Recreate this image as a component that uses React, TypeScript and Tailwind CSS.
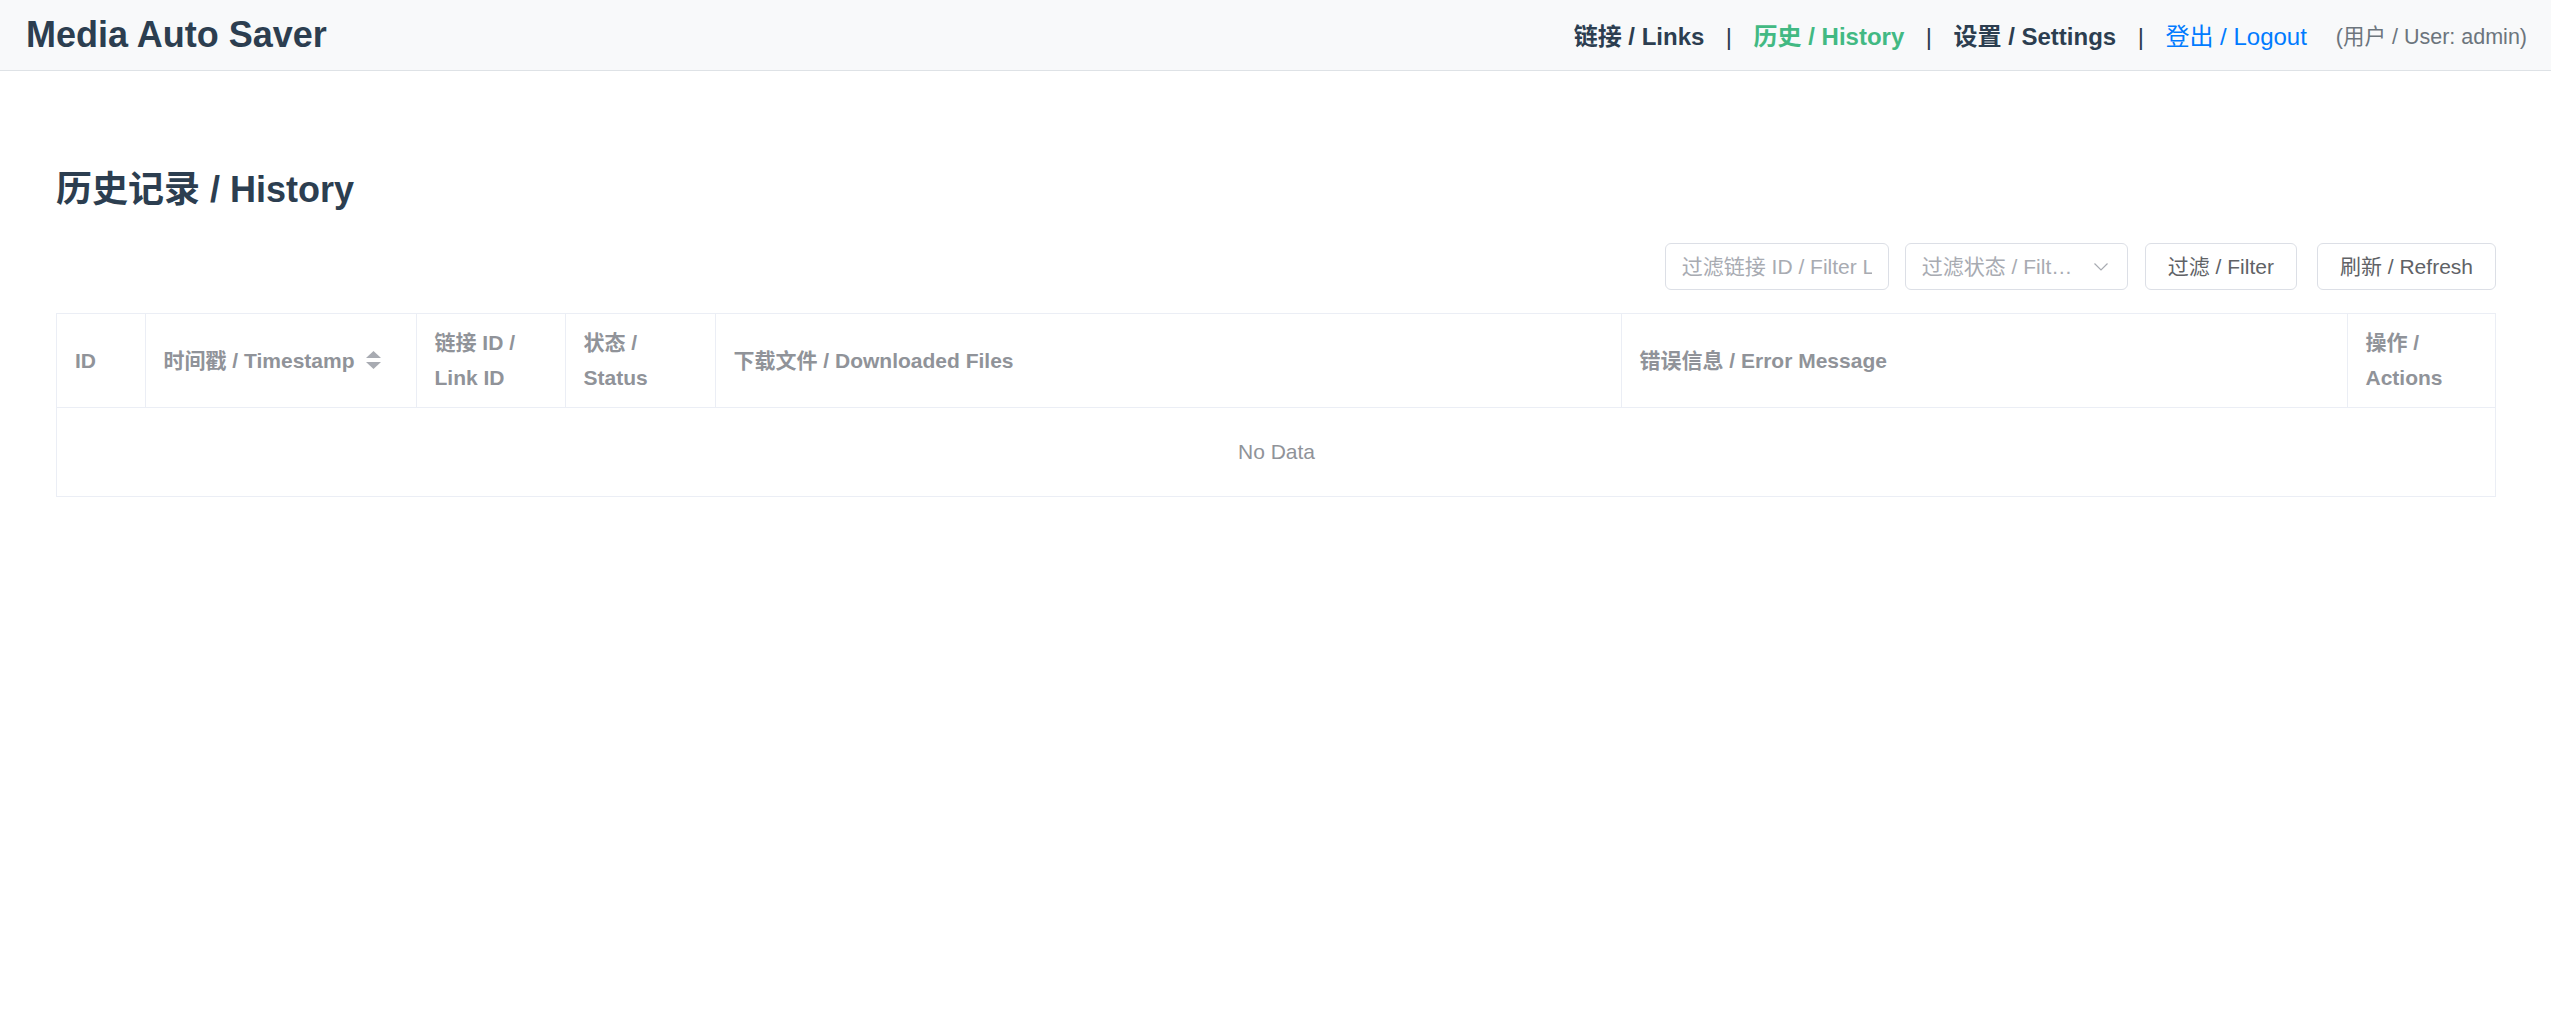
import { useState } from 'react';

const columns = [
  { key: 'id', label: 'ID', width: 88 },
  { key: 'timestamp', label: '时间戳 / Timestamp', width: 271, sortable: true },
  { key: 'link', label: '链接 ID / Link ID', width: 149 },
  { key: 'status', label: '状态 / Status', width: 150 },
  { key: 'files', label: '下载文件 / Downloaded Files', width: 906 },
  { key: 'error', label: '错误信息 / Error Message', width: 726 },
  { key: 'actions', label: '操作 / Actions', width: 149 },
];

function SortCaret() {
  return (
    <svg width="15" height="18" viewBox="0 0 15 18" className="ml-[11px] shrink-0">
      <polygon points="0,7 7.5,0 15,7" fill="#a8abb2" />
      <polygon points="0,11 7.5,18 15,11" fill="#a8abb2" />
    </svg>
  );
}

function Header() {
  const sep = <span className="mx-[21.5px] font-normal text-[#2c3e50]">|</span>;
  return (
    <header className="h-[71px] bg-[#f8f9fa] border-b border-[#dee2e6] pl-[26px] pr-6 flex items-center justify-between">
      <h1 className="text-[36px] leading-[36px] font-bold text-[#2c3e50]">Media Auto Saver</h1>
      <nav className="flex items-center text-[24px] leading-[30px] mt-[4px]">
        <a className="font-bold text-[#2c3e50]">链接 / Links</a>
        {sep}
        <a className="font-bold text-[#42b983]">历史 / History</a>
        {sep}
        <a className="font-bold text-[#2c3e50]">设置 / Settings</a>
        {sep}
        <a className="text-[#007bff]">登出 / Logout</a>
        <span className="ml-[29px] text-[21.5px] text-[#6c757d]">(用户 / User: admin)</span>
      </nav>
    </header>
  );
}

export default function App() {
  const [linkId, setLinkId] = useState('');
  const rows: string[] = [];

  return (
    <div className="min-h-screen bg-white font-['Liberation_Sans','Noto_Sans_CJK_SC',sans-serif]">
      <Header />
      <main className="pl-[56px] pr-[55px] pt-[101px]">
        <h2 className="text-[36px] leading-[36px] font-bold text-[#2c3e50]">历史记录 / History</h2>

        <div className="mt-[35px] flex justify-end items-center text-[21px]">
          <input
            value={linkId}
            onChange={e => setLinkId(e.target.value)}
            placeholder="过滤链接 ID / Filter Link ID"
            className="w-[224px] h-[47px] px-[16px] border border-[#dcdfe6] rounded-[6px] text-[#606266] placeholder:text-[#a8abb2] outline-none"
          />
          <div className="ml-[16px] w-[223px] h-[47px] pl-[16px] pr-[19px] border border-[#dcdfe6] rounded-[6px] flex items-center">
            <span className="flex-1 truncate text-[#a8abb2]">过滤状态 / Filter Status</span>
            <svg width="14" height="8" viewBox="0 0 14 8" className="ml-[10px] shrink-0">
              <polyline points="0.5,0.5 7,7 13.5,0.5" fill="none" stroke="#a8abb2" strokeWidth="1.2" />
            </svg>
          </div>
          <button className="ml-[17px] h-[47px] px-[22px] border border-[#dcdfe6] rounded-[6px] text-[#606266] bg-white">过滤 / Filter</button>
          <button className="ml-[20px] h-[47px] px-[22px] border border-[#dcdfe6] rounded-[6px] text-[#606266] bg-white">刷新 / Refresh</button>
        </div>

        <div className="mt-[23px] border border-[#ebeef5]">
          <table className="w-full table-fixed border-collapse text-[21px]">
            <colgroup>
              {columns.map(c => <col key={c.key} style={{ width: c.width }} />)}
            </colgroup>
            <thead>
              <tr>
                {columns.map((c, i) => (
                  <th
                    key={c.key}
                    className={`h-[93px] px-[18px] py-[11px] text-left align-middle font-bold text-[#909399] leading-[35px] border-b border-[#ebeef5] ${i < columns.length - 1 ? 'border-r' : ''}`}
                  >
                    {c.sortable ? (
                      <div className="flex items-center">
                        <span>{c.label}</span>
                        <SortCaret />
                      </div>
                    ) : (
                      c.label
                    )}
                  </th>
                ))}
              </tr>
            </thead>
            <tbody>
              {rows.length === 0 && (
                <tr>
                  <td colSpan={columns.length} className="h-[89px] text-center text-[#909399] leading-[30px]">No Data</td>
                </tr>
              )}
            </tbody>
          </table>
        </div>
      </main>
    </div>
  );
}
